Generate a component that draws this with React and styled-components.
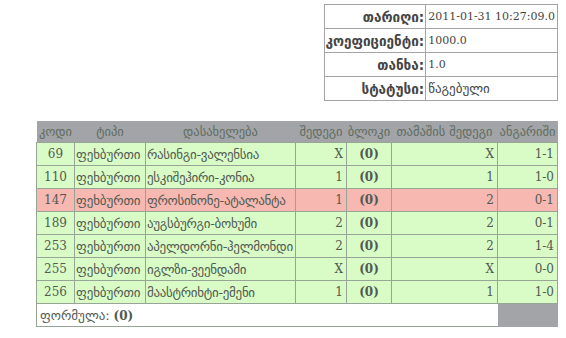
import React from "react";
import styled, { createGlobalStyle } from "styled-components";

const GlobalStyle = createGlobalStyle`
  body {
    margin: 0;
    background: #fff;
    font-family: "DejaVu Serif", "DejaVu Sans", serif;
  }
`;

const Page = styled.div`
  padding: 4px 8px 0 37px;
  display: flex;
  flex-direction: column;
  align-items: flex-end;
`;

const InfoTable = styled.table`
  border-collapse: collapse;
  border: 1px solid #a4a4a4;
  margin-bottom: 20px;
  color: #444;
  font-size: 11px;
`;

const InfoLabel = styled.td`
  border: 1px solid #a4a4a4;
  text-align: right;
  font-weight: bold;
  font-family: "DejaVu Sans", sans-serif;
  font-size: 13.5px;
  padding: 0 1px 0 0;
  height: 23px;
  white-space: nowrap;
`;

const InfoValue = styled.td`
  border: 1px solid #a4a4a4;
  padding: 0 2px;
  height: 23px;
  width: 126px;
  white-space: nowrap;
`;

const Geo = styled.span`
  font-family: "DejaVu Sans", sans-serif;
  font-size: 13px;
`;

const MainTable = styled.table`
  border-collapse: collapse;
  width: 521px;
  table-layout: fixed;
  font-size: 12px;
  color: #525a52;
`;

const Col = styled.col`
  width: ${(p) => p.w}px;
`;

const HeadCell = styled.th`
  background: #a2a4a8;
  color: #5e6c5e;
  font-weight: normal;
  font-family: "DejaVu Sans", sans-serif;
  font-size: 12.5px;
  height: 21px;
  padding: 0;
  text-align: center;
  white-space: nowrap;
  overflow: hidden;
`;

const Row = styled.tr`
  background: ${(p) => (p.lost ? "#f6b8b1" : "#d9fcc7")};
`;

const Cell = styled.td`
  border: 1px solid #97a597;
  padding: 0 3px;
  height: 22px;
  text-align: ${(p) => p.align || "left"};
  font-weight: ${(p) => (p.bold ? "bold" : "normal")};
  white-space: nowrap;
  overflow: hidden;
`;

const GeoCell = styled(Cell)`
  font-family: "DejaVu Sans", sans-serif;
  font-size: 13px;
  padding: 0 1px;
  letter-spacing: ${(p) => (p.tight ? "-0.3px" : "-0.1px")};
`;

const FormulaCell = styled.td`
  background: #fff;
  border: 1px solid #97a597;
  border-right: none;
  height: 22px;
  padding: 0 3px;
`;

const GrayCell = styled.td`
  background: #a2a4a8;
  border-bottom: 1px solid #a2a4a8;
`;

const info = [
  ["თარიღი:", "2011-01-31 10:27:09.0", false],
  ["კოეფიციენტი:", "1000.0", false],
  ["თანხა:", "1.0", false],
  ["სტატუსი:", "წაგებული", true],
];

const columns = [
  ["კოდი", 38],
  ["ტიპი", 71],
  ["დასახელება", 150],
  ["შედეგი", 51],
  ["ბლოკი", 45],
  ["თამაშის შედეგი", 106],
  ["ანგარიში", 60],
];

const rows = [
  { code: 69, name: "რასინგი-ვალენსია", result: "X", game: "X", score: "1-1" },
  { code: 110, name: "ესკიშეჰირი-კონია", result: "1", game: "1", score: "1-0" },
  { code: 147, name: "ფროსინონე-ატალანტა", result: "1", game: "2", score: "0-1", lost: true },
  { code: 189, name: "აუგსბურგი-ბოხუმი", result: "2", game: "2", score: "0-1" },
  { code: 253, name: "აპელდორნი-ჰელმონდი", result: "2", game: "2", score: "1-4" },
  { code: 255, name: "იგლზი-ვეენდამი", result: "X", game: "X", score: "0-0" },
  { code: 256, name: "მაასტრიხტი-ემენი", result: "1", game: "1", score: "1-0" },
];

const App = () => {
  return (
    <Page>
      <GlobalStyle />
      <InfoTable>
        <tbody>
          {info.map(([label, value, geo]) => (
            <tr key={label}>
              <InfoLabel>{label}</InfoLabel>
              <InfoValue>{geo ? <Geo>{value}</Geo> : value}</InfoValue>
            </tr>
          ))}
        </tbody>
      </InfoTable>
      <MainTable>
        <colgroup>
          {columns.map(([title, w]) => (
            <Col key={title} w={w} />
          ))}
        </colgroup>
        <thead>
          <tr>
            {columns.map(([title]) => (
              <HeadCell key={title}>{title}</HeadCell>
            ))}
          </tr>
        </thead>
        <tbody>
          {rows.map((r) => (
            <Row key={r.code} lost={r.lost}>
              <Cell align="center">{r.code}</Cell>
              <GeoCell>ფეხბურთი</GeoCell>
              <GeoCell tight>{r.name}</GeoCell>
              <Cell align="right">{r.result}</Cell>
              <Cell align="center" bold>
                (0)
              </Cell>
              <Cell align="right">{r.game}</Cell>
              <Cell align="right">{r.score}</Cell>
            </Row>
          ))}
          <tr>
            <FormulaCell colSpan={6}>
              <Geo>ფორმულა:</Geo> <b>(0)</b>
            </FormulaCell>
            <GrayCell />
          </tr>
        </tbody>
      </MainTable>
    </Page>
  );
};

export default App;
